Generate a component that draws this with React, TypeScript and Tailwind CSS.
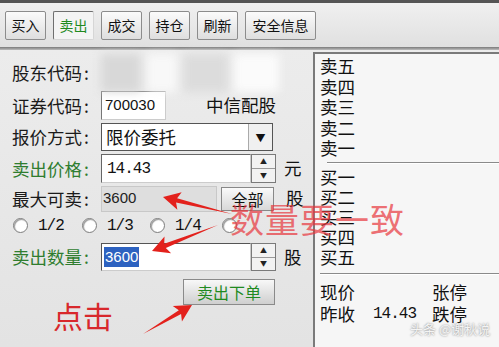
import React from 'react'

const CJK = "font-['Noto_Sans_CJK_SC',sans-serif]"

function Arrow({ from, to, head = 14, width = 9, shaft = 2.2 }: { from: [number, number]; to: [number, number]; head?: number; width?: number; shaft?: number }) {
  const [x0, y0] = from
  const [x1, y1] = to
  const len = Math.hypot(x1 - x0, y1 - y0)
  const dx = (x1 - x0) / len
  const dy = (y1 - y0) / len
  const nx = -dy
  const ny = dx
  const hx = x1 - dx * head
  const hy = y1 - dy * head
  const pts = [
    [x0, y0],
    [hx + nx * shaft, hy + ny * shaft],
    [hx + nx * width - dx * 3, hy + ny * width - dy * 3],
    [x1, y1],
    [hx - nx * width - dx * 3, hy - ny * width - dy * 3],
    [hx - nx * shaft, hy - ny * shaft],
  ]
  return <polygon points={pts.map((p) => p.join(',')).join(' ')} fill="#e3211c" />
}

function ToolButton({ label, active, wide }: { label: string; active?: boolean; wide?: boolean }) {
  return (
    <div
      className={`h-[29px] ${wide ? 'w-[71px]' : 'w-[41px]'} flex items-center justify-center text-[14px] rounded-[2px] border ${
        active
          ? 'border-t-[#6f6f6f] border-l-[#6f6f6f] border-b-[#d6d6d6] border-r-[#d6d6d6] bg-[#f4f4f4] text-[#1f8a1f]'
          : 'border-[#8c8c8c] bg-gradient-to-b from-[#fbfbfb] to-[#dedede] text-[#111]'
      }`}
    >
      {label}
    </div>
  )
}

function Spinner() {
  return (
    <div className="w-[25px] h-full flex flex-col border border-[#7a7a7a] bg-[#f2f2f2]">
      <div className="flex-1 flex items-center justify-center border-b border-[#9a9a9a] text-[7px] leading-none text-[#222]">▲</div>
      <div className="flex-1 flex items-center justify-center text-[7px] leading-none text-[#222]">▼</div>
    </div>
  )
}

function Label({ text, green }: { text: string; green?: boolean }) {
  return (
    <div className={`w-[89px] shrink-0 text-[17.5px] leading-none ${green ? 'text-[#2f7d2f]' : 'text-[#1a1a1a]'}`}>
      {text}
      <span className="ml-[2px]">:</span>
    </div>
  )
}

function Radio({ label, w }: { label?: string; w: string }) {
  return (
    <div className={`flex items-center ${w}`}>
      <div className="w-[15px] h-[15px] rounded-full border border-[#7d7d7d] bg-white shadow-[inset_1px_1px_1px_#999]" />
      {label && <span className="ml-[10px] font-['Liberation_Mono',monospace] text-[16px] tracking-[-1px] text-[#111]">{label}</span>}
    </div>
  )
}

export default function App() {
  const sells = ['卖五', '卖四', '卖三', '卖二', '卖一']
  const buys = ['买一', '买二', '买三', '买四', '买五']

  return (
    <div className={`relative w-[499px] h-[347px] overflow-hidden bg-[#e6e6e6] ${CJK}`}>
      <div className="h-[3px] bg-[#555]" />
      {/* toolbar */}
      <div className="h-[44px] flex items-center gap-[7px] pl-[5px] pt-[1px] bg-gradient-to-b from-[#f0f0f0] to-[#e0e0e0]">
        <ToolButton label="买入" />
        <ToolButton label="卖出" active />
        <ToolButton label="成交" />
        <ToolButton label="持仓" />
        <ToolButton label="刷新" />
        <ToolButton label="安全信息" wide />
      </div>
      <div className="h-[3px] bg-gradient-to-b from-[#7a7a7a] to-[#bdbdbd]" />

      <div className="flex h-[297px] bg-gradient-to-b from-[#ececec] to-[#e3e3e3]">
        {/* left form */}
        <div className="w-[313px] shrink-0 flex flex-col pl-[12px] pt-[5px]">
          <div className="h-[36px] flex items-center">
            <Label text="股东代码" />
            <div className="h-[38px] w-[180px] flex gap-[6px] blur-[5px]">
              <div className="w-[40px] h-full bg-[#d8d8d8]" />
              <div className="w-[30px] h-full bg-[#f8f8f8]" />
              <div className="w-[45px] h-full bg-[#dcdcdc]" />
              <div className="w-[45px] h-full bg-[#fbfbfb]" />
            </div>
          </div>
          <div className="h-[29px] flex items-center">
            <Label text="证券代码" />
            <div className="w-[65px] h-[29px] flex items-center pl-[3px] bg-white border border-t-[#777] border-l-[#777] border-b-[#ccc] border-r-[#ccc] font-['Liberation_Sans',sans-serif] text-[15px] text-[#111]">
              700030
            </div>
            <div className="ml-[40px] text-[17.5px] text-[#111]">中信配股</div>
          </div>
          <div className="mt-[3px] h-[28px] flex items-center">
            <Label text="报价方式" />
            <div className="w-[172px] h-[28px] flex bg-white border border-[#555]">
              <div className="flex-1 flex items-center pl-[4px] text-[17.5px] text-[#111]">限价委托</div>
              <div className="w-[24px] flex items-center justify-center border-l border-[#aaa] bg-[#f0f0f0] text-[10px] text-[#111]">▼</div>
            </div>
          </div>
          <div className="mt-[3px] h-[29px] flex items-center">
            <Label text="卖出价格" green />
            <div className="w-[150px] h-[29px] flex items-center pl-[5px] bg-white border border-t-[#666] border-l-[#666] border-b-[#ccc] border-r-[#ccc] font-['Liberation_Mono',monospace] text-[16px] tracking-[-1px] text-[#111]">
              14.43
            </div>
            <Spinner />
            <div className="ml-[8px] text-[17.5px] text-[#111]">元</div>
          </div>
          <div className="mt-[2px] h-[27px] flex items-center">
            <Label text="最大可卖" />
            <div className="w-[116px] h-[26px] flex items-center pl-[1px] bg-[#dedede] border border-[#c8c8c8] font-['Liberation_Sans',sans-serif] text-[15px] text-[#222]">
              3600
            </div>
            <div className="ml-[4px] w-[53px] h-[24px] flex items-center justify-center border border-[#888] bg-gradient-to-b from-[#fafafa] to-[#d8d8d8] text-[16px] text-[#111]">
              全部
            </div>
            <div className="ml-[12px] text-[17.5px] text-[#111]">股</div>
          </div>
          <div className="h-[27px] flex items-center pl-[1px]">
            <Radio label="1/2" w="w-[69px]" />
            <Radio label="1/3" w="w-[68px]" />
            <Radio label="1/4" w="w-[72px]" />
            <Radio w="w-[20px]" />
          </div>
          <div className="mt-[4px] h-[28px] flex items-center">
            <Label text="卖出数量" green />
            <div className="w-[150px] h-[28px] flex items-center pl-[2px] bg-white border border-t-[#555] border-l-[#555] border-b-[#ccc] border-r-[#ccc]">
              <span className="bg-[#2d62c0] text-white font-['Liberation_Sans',sans-serif] text-[15px] leading-[20px] px-[1px]">3600</span>
            </div>
            <Spinner />
            <div className="ml-[8px] text-[17.5px] text-[#111]">股</div>
          </div>
          <div className="mt-[8px] pl-[171px]">
            <div className="w-[92px] h-[26px] flex items-center justify-center border border-[#8a8a8a] bg-gradient-to-b from-[#f8f8f8] to-[#cfcfcf] text-[16px] text-[#1f8a1f]">
              卖出下单
            </div>
          </div>
        </div>

        {/* quotes panel */}
        <div className="flex-1 mt-[2px] flex flex-col bg-[#f6f6f6] border-l-2 border-t-2 border-[#7a7a7a] pl-[5px] text-[17.5px] text-[#111]">
          <div className="pt-[2px] flex flex-col">
            {sells.map((s) => (
              <div key={s} className="h-[20.6px] leading-[20px]">{s}</div>
            ))}
          </div>
          <div className="mt-[3px] ml-[7px] h-[2px] border-t border-[#8a8a8a] border-b border-b-white" />
          <div className="mt-[3px] flex flex-col">
            {buys.map((s) => (
              <div key={s} className="h-[20px] leading-[20px]">{s}</div>
            ))}
          </div>
          <div className="mt-[6px] h-[2px] border-t border-[#8a8a8a] border-b border-b-white" />
          <div className="mt-[6px] flex h-[22px] items-center">
            <span className="w-[112px]">现价</span>
            <span>张停</span>
          </div>
          <div className="flex h-[22px] items-center">
            <span className="w-[53px]">昨收</span>
            <span className="w-[59px] font-['Liberation_Mono',monospace] text-[16px] tracking-[-1px]">14.43</span>
            <span>跌停</span>
          </div>
        </div>
      </div>

      {/* annotations */}
      <div className="absolute left-[230px] top-[202px] text-[34px] leading-none tracking-[1px] text-[#e8343a]/70">数量要一致</div>
      <div className="absolute left-[53px] top-[300px] text-[30px] leading-none text-[#d8282c]">点击</div>
      <svg className="absolute left-0 top-0" width="499" height="347">
        <Arrow from={[232, 214]} to={[163, 197]} />
        <Arrow from={[218, 225]} to={[152, 251]} />
        <Arrow from={[143, 334]} to={[192, 305]} />
      </svg>
      <div className="absolute left-[410px] top-[322px] text-[13px] leading-none text-[#f4f4f4] [text-shadow:0_0_2px_#777]">头条 @谢秋说</div>
    </div>
  )
}
